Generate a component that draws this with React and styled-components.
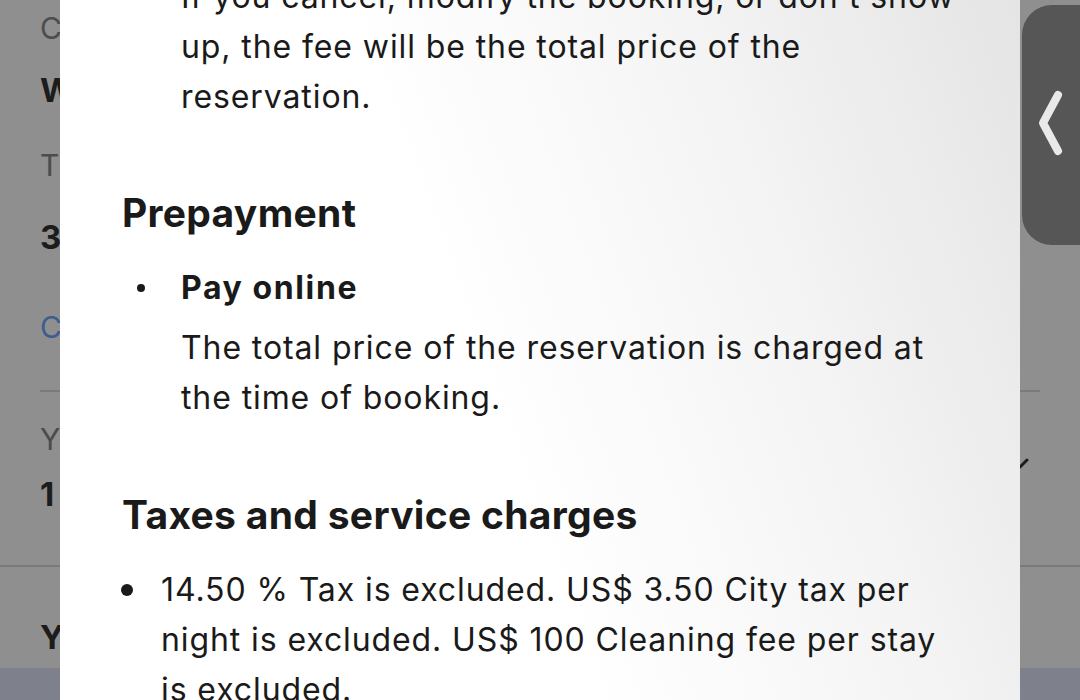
import styled, { createGlobalStyle } from "styled-components";

const GlobalStyle = createGlobalStyle`
  html, body {
    margin: 0;
    padding: 0;
    background: #8f8f8f;
  }
  body {
    font-family: Inter, "Noto Sans", "Liberation Sans", sans-serif;
    -webkit-font-smoothing: antialiased;
  }
`;

const Screen = styled.div`
  position: relative;
  width: 1080px;
  height: 700px;
  overflow: hidden;
  background: #ffffff;
`;

/* page under the sheet */
const Page = styled.div`
  display: flex;
  flex-direction: column;
`;

const Label = styled.div`
  padding: 0 40px;
  margin-top: ${(p) => p.$gap || 0}px;
  font-size: 30px;
  line-height: 40px;
  letter-spacing: 3px;
  color: ${(p) => (p.$link ? "#6aa6ff" : "#888888")};
  white-space: nowrap;
`;

const Value = styled.div`
  padding: 0 40px;
  margin-top: ${(p) => p.$gap || 0}px;
  font-size: 33px;
  font-weight: 700;
  line-height: 40px;
  letter-spacing: 1px;
  color: #333333;
  white-space: nowrap;
`;

const Divider = styled.hr`
  border: 0;
  height: 2px;
  background: #dadada;
  margin: ${(p) => p.$gap || 0}px ${(p) => (p.$full ? 0 : 40)}px 0;
`;

const SelectRow = styled.div`
  display: flex;
  align-items: center;
  justify-content: space-between;
  margin-top: 27px;
  padding-right: 48px;
`;

const Chevron = styled.svg`
  width: 24px;
  height: 24px;
  margin-top: -8px;
`;

const PriceBox = styled.div`
  margin-top: 11px;
  height: 200px;
  background: #e1e6f8;
`;

const Backdrop = styled.div`
  position: absolute;
  inset: 0;
  background: rgba(0, 0, 0, 0.44);
`;

const SideTab = styled.div`
  position: absolute;
  top: 5px;
  right: 0;
  width: 58px;
  height: 240px;
  display: flex;
  align-items: center;
  justify-content: center;
  background: #565656;
  border-radius: 30px 0 0 30px;
`;

/* the sheet */
const Sheet = styled.div`
  position: absolute;
  top: -28px;
  bottom: -80px;
  left: 60px;
  width: 960px;
  padding: 0 55px 0 62px;
  box-sizing: border-box;
  background: linear-gradient(250deg, #e4e4e4 0%, #f5f5f5 30%, #ffffff 55%);
  color: #1a1a1a;
  font-size: 32px;
  line-height: 50px;
  letter-spacing: 0.9px;
`;

const Paragraph = styled.p`
  margin: 0;
  padding-left: ${(p) => p.$indent || 0}px;
`;

const Heading = styled.h2`
  margin: ${(p) => p.$gap}px 0 0;
  font-size: 39px;
  font-weight: 700;
  line-height: 50px;
  letter-spacing: 0.3px;
  color: #1a1a1a;
`;

const List = styled.ul`
  list-style: none;
  margin: ${(p) => p.$gap}px 0 0;
  padding: 0 0 0 ${(p) => p.$indent}px;
`;

const Item = styled.li`
  position: relative;

  &::before {
    content: "";
    position: absolute;
    left: ${(p) => p.$dotX}px;
    top: 25px;
    width: ${(p) => p.$dot}px;
    height: ${(p) => p.$dot}px;
    margin-top: ${(p) => -p.$dot / 2}px;
    border-radius: 50%;
    background: #1a1a1a;
  }
`;

const ItemTitle = styled.div`
  font-weight: 700;
  letter-spacing: 1.6px;
`;

const ItemText = styled.div`
  margin-top: 10px;
`;

export default function App() {
  return (
    <Screen>
      <GlobalStyle />
      <Page>
        <Label $gap={8}>Check-in</Label>
        <Value $gap={22}>Wed, 14 Jun 2023</Value>
        <Label $gap={35}>Total length of stay:</Label>
        <Value $gap={32}>3 nights</Value>
        <Label $gap={50} $link>Change your selection</Label>
        <Divider $gap={43} />
        <SelectRow>
          <div>
            <Label>You selected</Label>
            <Value $gap={15}>1 room for 2 adults</Value>
          </div>
          <Chevron viewBox="0 0 24 24" fill="none" stroke="#333" strokeWidth="3" strokeLinecap="round" strokeLinejoin="round">
            <path d="M5 9l7 7 7-7" />
          </Chevron>
        </SelectRow>
        <Divider $gap={51} $full />
        <Value $gap={50}>Your price summary</Value>
        <PriceBox />
      </Page>
      <Backdrop />
      <SideTab>
        <svg width="30" height="80" viewBox="0 0 30 80" fill="none">
          <path d="M22 10 L7 38 L22 66" stroke="#e9e9e9" strokeWidth="8" strokeLinecap="round" strokeLinejoin="round" />
        </svg>
      </SideTab>
      <Sheet>
        <Paragraph $indent={59}>
          If you cancel, modify the booking, or don't show up, the fee will be the total price of the reservation.
        </Paragraph>
        <Heading $gap={66}>Prepayment</Heading>
        <List $gap={25} $indent={59}>
          <Item $dot={8} $dotX={-44}>
            <ItemTitle>Pay online</ItemTitle>
            <ItemText>The total price of the reservation is charged at the time of booking.</ItemText>
          </Item>
        </List>
        <Heading $gap={67}>Taxes and service charges</Heading>
        <List $gap={25} $indent={39}>
          <Item $dot={12} $dotX={-40}>
            14.50 % Tax is excluded. US$ 3.50 City tax per night is excluded. US$ 100 Cleaning fee per stay is excluded.
          </Item>
        </List>
      </Sheet>
    </Screen>
  );
}
